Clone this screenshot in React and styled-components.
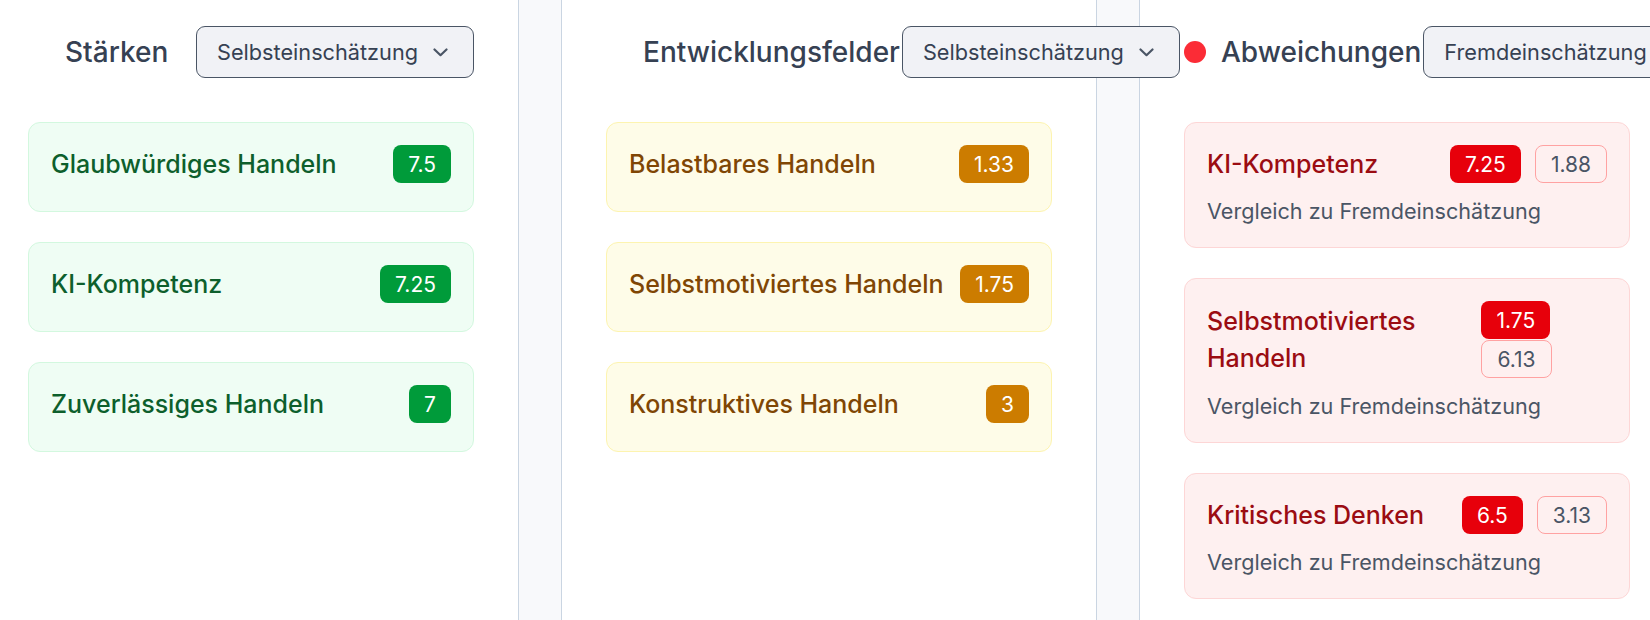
import React from 'react'
import styled, { createGlobalStyle } from 'styled-components'

const GlobalStyle = createGlobalStyle`
    body {
        margin: 0;
        background: #ffffff;
        font-family: Inter, "Noto Sans", "Liberation Sans", sans-serif;
        color: #364153;
    }
`

const tones = {
    green: { bg: '#effdf4', border: '#d3f8df', text: '#0d5f2c', badge: '#009b3a' },
    yellow: { bg: '#fefce8', border: '#fdf4b0', text: '#7f4604', badge: '#cc7c00' },
    red: { bg: '#fef0f0', border: '#fdd6d6', text: '#9b0c12', badge: '#e7000b' },
}

const Board = styled.div`
    display: flex;
    height: 620px;
    margin-left: -16px;
    overflow: hidden;
`

const Column = styled.section`
    flex: 0 0 534px;
    width: 534px;
    min-width: 0;
    box-sizing: border-box;
    padding: 26px 44px 0;
    background: #ffffff;
`

const Gutter = styled.div`
    flex: 0 0 44px;
    box-sizing: border-box;
    background: #f8f9fb;
    border-left: 1px solid #cad5e2;
    border-right: 1px solid #cad5e2;
`

const Header = styled.header`
    display: flex;
    align-items: center;
    justify-content: space-between;
    gap: 2px;
    height: 52px;
`

const TitleGroup = styled.div`
    display: flex;
    align-items: center;
    gap: 15px;
    flex-shrink: 0;
`

const Dot = styled.span`
    width: 22px;
    height: 22px;
    border-radius: 50%;
    background: ${p => (p.$on ? '#fb2c36' : 'transparent')};
`

const Heading = styled.h2`
    margin: 0;
    font-size: 28px;
    font-weight: 500;
    color: #364153;
    white-space: nowrap;
`

/* the select may run past its column, so it sits above the gutter */
const Select = styled.button`
    position: relative;
    z-index: 1;
    flex-shrink: 0;
    display: flex;
    align-items: center;
    gap: 15px;
    height: 52px;
    box-sizing: border-box;
    padding: 0 25px 0 20px;
    background: #f1f2f6;
    border: 1px solid #4a5565;
    border-radius: 9px;
    font-family: inherit;
    font-size: 21.7px;
    color: #364153;
    white-space: nowrap;
`

const Chevron = () => (
    <svg width="15" height="9" viewBox="0 0 15 9" fill="none">
        <polyline points="1.5,1.5 7.5,7.2 13.5,1.5" stroke="#4a5565" strokeWidth="2.2"
            strokeLinecap="round" strokeLinejoin="round" />
    </svg>
)

const List = styled.div`
    display: flex;
    flex-direction: column;
    gap: 30px;
    margin-top: 44px;
`

const Card = styled.div`
    padding: ${p => (p.$note ? '22px' : '22px 22px 28px')};
    background: ${p => tones[p.$tone].bg};
    border: 1px solid ${p => tones[p.$tone].border};
    border-radius: 12px;
`

const Row = styled.div`
    display: flex;
    align-items: center;
    justify-content: space-between;
    gap: 16px;
`

const Name = styled.span`
    font-size: 25px;
    font-weight: 500;
    line-height: 37px;
    color: ${p => tones[p.$tone].text};
`

const Scores = styled.div`
    display: flex;
    flex-wrap: wrap;
    column-gap: 14px;
    row-gap: 1px;
`

const Badge = styled.span`
    display: inline-flex;
    align-items: center;
    height: 38px;
    box-sizing: border-box;
    padding: 0 15px;
    border-radius: 8px;
    font-size: 21px;
    color: #ffffff;
    background: ${p => tones[p.$tone].badge};
`

const OutlineBadge = styled(Badge)`
    background: transparent;
    border: 1px solid #ffa2a2;
    color: #4a5565;
`

const Note = styled.div`
    margin-top: 14px;
    font-size: 21.6px;
    line-height: 28px;
    color: #4a5565;
`

const columns = [
    {
        title: 'Stärken',
        view: 'Selbsteinschätzung',
        tone: 'green',
        items: [
            { name: 'Glaubwürdiges Handeln', score: '7.5' },
            { name: 'KI-Kompetenz', score: '7.25' },
            { name: 'Zuverlässiges Handeln', score: '7' },
        ],
    },
    {
        title: 'Entwicklungsfelder',
        view: 'Selbsteinschätzung',
        tone: 'yellow',
        items: [
            { name: 'Belastbares Handeln', score: '1.33' },
            { name: 'Selbstmotiviertes Handeln', score: '1.75' },
            { name: 'Konstruktives Handeln', score: '3' },
        ],
    },
    {
        title: 'Abweichungen',
        view: 'Fremdeinschätzung',
        tone: 'red',
        alert: true,
        items: [
            { name: 'KI-Kompetenz', score: '7.25', other: '1.88' },
            { name: 'Selbstmotiviertes Handeln', score: '1.75', other: '6.13' },
            { name: 'Kritisches Denken', score: '6.5', other: '3.13' },
        ],
    },
]

const CompetenceColumn = ({ col }) => (
    <Column>
        <Header>
            <TitleGroup>
                <Dot $on={col.alert} />
                <Heading>{col.title}</Heading>
            </TitleGroup>
            <Select>
                {col.view}
                <Chevron />
            </Select>
        </Header>
        <List>
            {col.items.map(item => (
                <Card key={item.name} $tone={col.tone} $note={!!item.other}>
                    <Row>
                        <Name $tone={col.tone}>{item.name}</Name>
                        <Scores>
                            <Badge $tone={col.tone}>{item.score}</Badge>
                            {item.other && <OutlineBadge $tone={col.tone}>{item.other}</OutlineBadge>}
                        </Scores>
                    </Row>
                    {item.other && <Note>Vergleich zu Fremdeinschätzung</Note>}
                </Card>
            ))}
        </List>
    </Column>
)

const App = () => {
    return (
        <>
            <GlobalStyle />
            <Board>
                <CompetenceColumn col={columns[0]} />
                <Gutter />
                <CompetenceColumn col={columns[1]} />
                <Gutter />
                <CompetenceColumn col={columns[2]} />
            </Board>
        </>
    )
}

export default App
